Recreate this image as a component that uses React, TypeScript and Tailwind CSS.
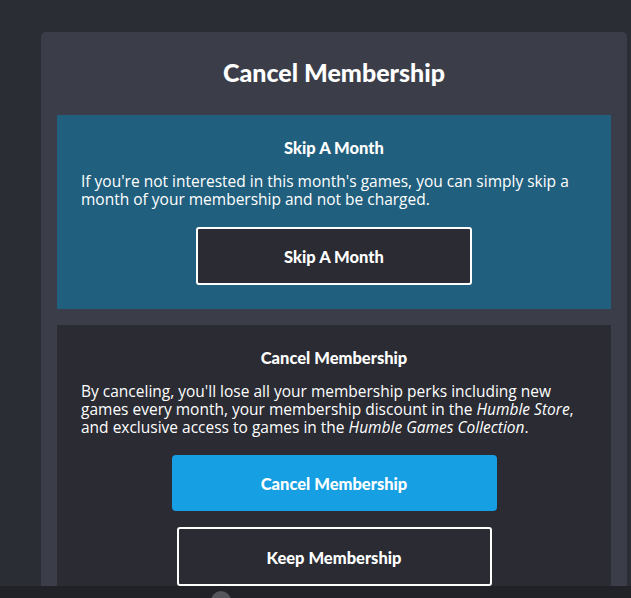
import React from "react";

const font = { fontFamily: "Lato, 'Noto Sans', sans-serif" };
const body = { fontFamily: "'Open Sans', 'Noto Sans', sans-serif" };

export default function App() {
  return (
    <div
      className="relative h-[598px] w-[631px] overflow-hidden bg-[#2b2d35] text-white"
      style={font}
    >
      <div className="ml-[41px] mt-[32px] w-[586px] rounded-t-[5px] bg-[#3b3e48] px-4 pb-10">
        <h1 className="pt-[26px] pb-[29px] text-center text-[25px] font-black leading-7">
          Cancel Membership
        </h1>

        <section className="flex flex-col bg-[#215f7e] px-6 pt-6 pb-6">
          <h2 className="text-center text-[16.5px] font-black leading-[18px]">Skip A Month</h2>
          <p className="mt-[15px] text-[15.5px] leading-[18px]" style={body}>
            If you're not interested in this month's games, you can simply skip a month of your
            membership and not be charged.
          </p>
          <button
            type="button"
            className="mx-auto mt-[19px] h-[58px] w-[276px] rounded-[3px] border-2 border-white bg-[#2a2b33] pt-[2px] text-[16.5px] font-black"
          >
            Skip A Month
          </button>
        </section>

        <section className="mt-4 flex flex-col bg-[#2a2b33] px-6 pt-6 pb-6">
          <h2 className="text-center text-[16.5px] font-black leading-[18px]">Cancel Membership</h2>
          <p className="mt-[15px] text-[15.5px] leading-[18px]" style={body}>
            By canceling, you'll lose all your membership perks including new games every month,
            your membership discount in the <em>Humble Store</em>, and exclusive access to games in
            the <em>Humble Games Collection</em>.
          </p>
          <button
            type="button"
            className="mx-auto mt-[19px] h-[56px] w-[325px] rounded-[4px] bg-[#179fe3] pt-[3px] text-[16.5px] font-black"
          >
            Cancel Membership
          </button>
          <button
            type="button"
            className="mx-auto mt-4 h-[59px] w-[315px] rounded-[3px] border-2 border-white bg-[#2a2b33] pt-[3px] text-[16.5px] font-black"
          >
            Keep Membership
          </button>
        </section>
      </div>

      <div className="absolute inset-x-0 bottom-0 h-[12px] bg-[#202227]">
        <div className="absolute left-[211px] top-[5px] h-5 w-5 rounded-full bg-[#55565c]" />
      </div>
    </div>
  );
}
